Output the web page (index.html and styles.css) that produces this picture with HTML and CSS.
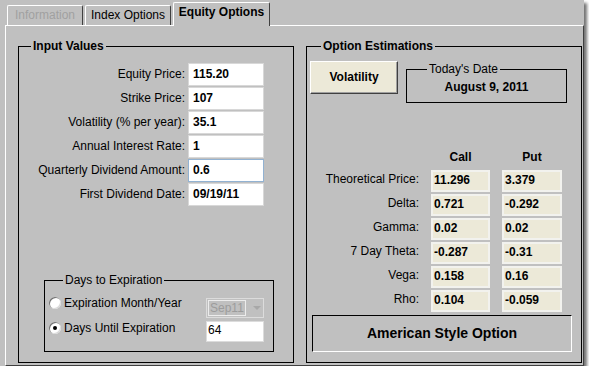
FILE: index.html
```html
<!DOCTYPE html>
<html>

<head>
    <title>Equity Options</title>
    <link rel="stylesheet" href="styles.css">
</head>

<body>
    <div class="window">
        <div class="tabs">
            <div class="tab tab-info disabled">Information</div>
            <div class="tab tab-index">Index Options</div>
            <div class="tab tab-equity active">Equity Options</div>
        </div>
        <div class="panel">
            <fieldset class="group group-input">
                <legend>Input Values</legend>
                <div class="inputs">
                    <label>Equity Price:</label>
                    <div class="field">115.20</div>
                    <label>Strike Price:</label>
                    <div class="field">107</div>
                    <label>Volatility (% per year):</label>
                    <div class="field">35.1</div>
                    <label>Annual Interest Rate:</label>
                    <div class="field">1</div>
                    <label>Quarterly Dividend Amount:</label>
                    <div class="field focused">0.6</div>
                    <label>First Dividend Date:</label>
                    <div class="field">09/19/11</div>
                </div>
                <fieldset class="group days">
                    <legend>Days to Expiration</legend>
                    <div class="days-row row-month">
                        <div class="choice">
                            <span class="radio"></span>
                            <span>Expiration Month/Year</span>
                        </div>
                        <div class="combo">
                            <span class="combo-text">Sep11</span>
                            <span class="combo-arrow"></span>
                        </div>
                    </div>
                    <div class="days-row row-days">
                        <div class="choice">
                            <span class="radio checked"></span>
                            <span>Days Until Expiration</span>
                        </div>
                        <div class="days-field">64</div>
                    </div>
                </fieldset>
            </fieldset>

            <fieldset class="group group-output">
                <legend>Option Estimations</legend>
                <div class="top-row">
                    <div class="button">Volatility</div>
                    <fieldset class="group today">
                        <legend>Today's Date</legend>
                        <div class="today-value">August 9, 2011</div>
                    </fieldset>
                </div>
                <div class="results">
                    <div></div>
                    <div class="col-head">Call</div>
                    <div class="col-head">Put</div>

                    <div class="res-label">Theoretical Price:</div>
                    <div class="out">11.296</div>
                    <div class="out">3.379</div>

                    <div class="res-label">Delta:</div>
                    <div class="out">0.721</div>
                    <div class="out">-0.292</div>

                    <div class="res-label">Gamma:</div>
                    <div class="out">0.02</div>
                    <div class="out">0.02</div>

                    <div class="res-label">7 Day Theta:</div>
                    <div class="out">-0.287</div>
                    <div class="out">-0.31</div>

                    <div class="res-label">Vega:</div>
                    <div class="out">0.158</div>
                    <div class="out">0.16</div>

                    <div class="res-label">Rho:</div>
                    <div class="out">0.104</div>
                    <div class="out">-0.059</div>
                </div>
                <div class="style-box">American Style Option</div>
            </fieldset>
        </div>
    </div>
</body>

</html>
```

FILE: styles.css
```css
body {
    margin: 0;
    background-color: #ffffff;
    font-family: 'Liberation Sans', Arial, sans-serif;
    font-size: 12px;
    color: #000;
}

.window {
    box-sizing: border-box;
    width: 584px;
    height: 366px;
    padding: 2px 0 0 5px;
    display: flex;
    flex-direction: column;
    background-color: #c0c0c0;
    box-shadow: 3px 3px 3px rgba(0, 0, 0, 0.55);
}

/* tab strip */
.tabs {
    display: flex;
    align-items: flex-end;
    height: 23px;
    padding-left: 2px;
}

.tab {
    box-sizing: border-box;
    height: 20px;
    line-height: 19px;
    text-align: center;
    border-top: 1px solid #fff;
    border-left: 1px solid #fff;
    border-right: 1px solid #404040;
    border-radius: 2px 2px 0 0;
    background-color: #c0c0c0;
}

.tab-info {
    width: 76px;
}

.tab-index {
    width: 86px;
    margin-left: 2px;
}

.tab-equity {
    width: 97px;
    margin-left: 2px;
}

.tab.disabled {
    color: #a0a0a0;
}

.tab.active {
    position: relative;
    z-index: 1;
    height: 24px;
    margin-bottom: -1px;
    font-weight: bold;
}

/* tab body */
.panel {
    flex: 1;
    display: flex;
    gap: 12px;
    padding: 13px 1px 2px 12px;
    border-top: 1px solid #fff;
    border-left: 1px solid #fff;
    border-right: 1px solid #404040;
    border-bottom: 1px solid #404040;
}

.group {
    margin: 0;
    padding: 0;
    min-width: 0;
    border: 1px solid #000;
}

.group legend {
    padding: 0 2px;
    line-height: 14px;
    font-weight: bold;
}

.group-input,
.group-output {
    box-sizing: border-box;
    width: 276px;
    display: flex;
    flex-direction: column;
}

.group-input legend {
    margin-left: 12px;
}

.group-output legend {
    margin-left: 14px;
}

/* input values */
.inputs {
    display: grid;
    grid-template-columns: 166px 76px;
    grid-auto-rows: 23px;
    column-gap: 3px;
    row-gap: 1px;
    margin-top: 10px;
}

.inputs label {
    text-align: right;
    line-height: 22px;
}

.field {
    border: 1px solid #d8d8d8;
    background-color: #fff;
    padding-left: 4px;
    line-height: 21px;
    font-weight: bold;
}

.field.focused {
    border-color: #92b2d2;
}

/* days to expiration */
.days {
    box-sizing: border-box;
    width: 230px;
    margin: auto 0 10px 25px;
    padding: 11px 9px 9px 4px;
}

.days legend {
    margin-left: 14px;
    font-weight: normal;
}

.days-row {
    display: flex;
    align-items: flex-start;
    justify-content: space-between;
}

.row-month {
    height: 20px;
    margin-bottom: 3px;
}

.row-days {
    height: 21px;
}

.choice {
    display: flex;
    align-items: center;
    gap: 3px;
    line-height: 14px;
}

.row-month .choice {
    margin-top: -2px;
}

.radio {
    position: relative;
    width: 12px;
    height: 12px;
    border-radius: 50%;
    background-color: #fff;
    box-shadow: inset 1px 1px 0 #707070, inset -1px -1px 0 #d8d8d8;
}

.radio.checked::after {
    content: "";
    position: absolute;
    left: 4px;
    top: 4px;
    width: 4px;
    height: 4px;
    border-radius: 50%;
    background-color: #000;
}

.combo {
    box-sizing: border-box;
    width: 58px;
    height: 20px;
    display: flex;
    align-items: center;
    padding-left: 1px;
    border: 1px solid #dcdcdc;
}

.combo-text {
    box-sizing: border-box;
    height: 16px;
    line-height: 14px;
    padding: 0 1px;
    border: 1px solid #ececec;
    color: #9c9c9c;
}

.combo-arrow {
    margin-left: 7px;
    border-top: 4px solid #a8a8a8;
    border-left: 4px solid transparent;
    border-right: 4px solid transparent;
}

.days-field {
    box-sizing: border-box;
    width: 58px;
    height: 21px;
    padding-left: 1px;
    line-height: 17px;
    border: 1px solid #dcdcdc;
    background-color: #fff;
}

/* option estimations */
.top-row {
    display: flex;
    align-items: flex-start;
    margin-top: 8px;
    padding-left: 3px;
}

.button {
    box-sizing: border-box;
    width: 88px;
    height: 33px;
    line-height: 31px;
    text-align: center;
    font-weight: bold;
    background-color: #ece9d8;
    border: 1px solid;
    border-color: #fff #404040 #404040 #fff;
    box-shadow: inset -1px -1px 0 #a0a0a0;
}

.today {
    box-sizing: border-box;
    width: 161px;
    margin: 1px 0 0 8px;
    padding: 4px 0 8px;
}

.today legend {
    margin-left: 20px;
    font-weight: normal;
}

.today-value {
    text-align: center;
    line-height: 14px;
    font-weight: bold;
}

.results {
    display: grid;
    grid-template-columns: 112px 59px 60px;
    grid-template-rows: 18px;
    grid-auto-rows: 22px;
    column-gap: 12px;
    row-gap: 2px;
    margin-top: 47px;
}

.col-head {
    line-height: 14px;
    text-align: center;
    font-weight: bold;
}

.res-label {
    text-align: right;
    line-height: 18px;
}

.out {
    border: 2px solid #f2f2ee;
    background-color: #ece9d8;
    padding-left: 1px;
    line-height: 16px;
    font-weight: bold;
}

.style-box {
    height: 37px;
    box-sizing: border-box;
    margin: auto 9px 10px 5px;
    border: 1px solid;
    border-color: #000 #fff #fff #000;
    line-height: 35px;
    text-align: center;
    font-size: 14px;
    font-weight: bold;
}
```
